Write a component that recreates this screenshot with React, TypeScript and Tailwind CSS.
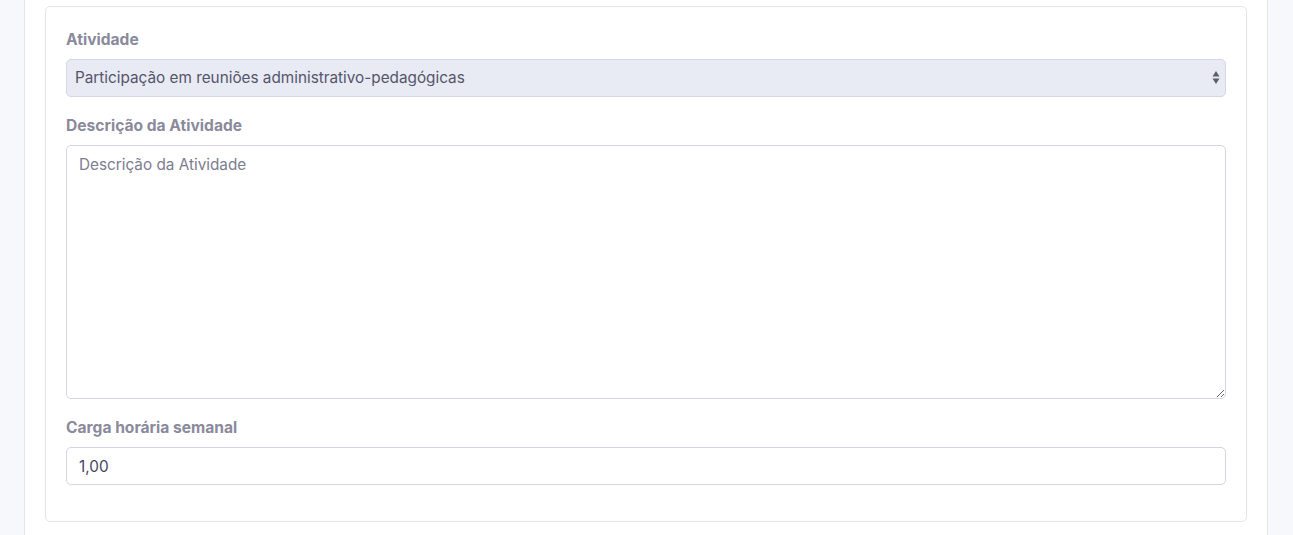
import React from "react";

const font = { fontFamily: "Inter, 'Noto Sans', sans-serif" };

function Label({ children }: { children: React.ReactNode }) {
  return (
    <label className="mb-[7px] block pt-px text-[15.6px] font-bold leading-6 text-[#8a8a9c]">{children}</label>
  );
}

export default function App() {
  return (
    <div className="min-h-[535px] bg-[#f7f8fc]" style={font}>
      <div className="ml-[24px] w-[1244px] min-h-[535px] border-x border-[#e6e6f0] bg-white pt-[6px] pl-[20px] pr-[20px]">
        <div className="w-[1202px] rounded-[5px] border border-[#e4e4ee] bg-white p-5">
          <div className="mb-4">
            <Label>Atividade</Label>
            <div className="relative">
              <div className="flex h-[38px] items-center rounded-[5px] border border-[#d6d6e6] bg-[#e8eaf4] pl-2 pt-px text-[15.3px] text-[#55556a]">
                Participação em reuniões administrativo-pedagógicas
              </div>
              <svg
                className="absolute right-[5px] top-[10px]"
                width="10"
                height="17"
                viewBox="0 0 10 17"
              >
                <path d="M5 2 L8.5 7.5 L1.5 7.5 Z" fill="#5e5e70" />
                <path d="M5 15 L8.5 9.5 L1.5 9.5 Z" fill="#5e5e70" />
              </svg>
            </div>
          </div>
          <div className="mb-4">
            <Label>Descrição da Atividade</Label>
            <textarea
              placeholder="Descrição da Atividade"
              className="block h-[254px] w-full rounded-[5px] border border-[#d6d3e6] bg-white px-3 py-2 text-[15.3px] leading-[22px] text-[#55556a] placeholder:text-[#7d7d90] outline-none"
              style={font}
            />
          </div>
          <div className="mb-4">
            <Label>Carga horária semanal</Label>
            <input
              defaultValue="1,00"
              className="block h-[38px] w-full rounded-[5px] border border-[#d6d3e6] bg-white px-3 pt-px text-[15.3px] text-[#45455a] outline-none"
              style={font}
            />
          </div>
        </div>
      </div>
    </div>
  );
}
